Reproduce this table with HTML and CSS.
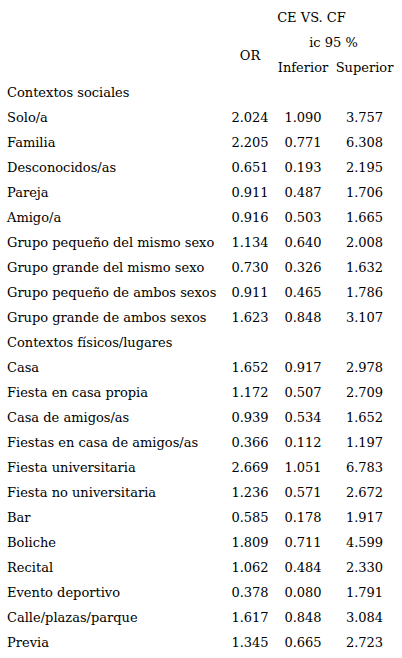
FILE: index.html
```html
<!DOCTYPE html>
<html lang="es">
<head>
<meta charset="utf-8">
<title>CE vs CF</title>
<link rel="stylesheet" href="styles.css">
</head>
<body>
<div class="table">
  <div class="head-title">CE VS. CF</div>
  <div class="head-or">OR</div>
  <div class="head-ic">ic 95 %</div>
  <div class="head-inf">Inferior</div>
  <div class="head-sup">Superior</div>

  <div class="section">Contextos sociales</div>
  <div class="label">Solo/a</div><div class="num">2.024</div><div class="num">1.090</div><div class="num">3.757</div>
  <div class="label">Familia</div><div class="num">2.205</div><div class="num">0.771</div><div class="num">6.308</div>
  <div class="label">Desconocidos/as</div><div class="num">0.651</div><div class="num">0.193</div><div class="num">2.195</div>
  <div class="label">Pareja</div><div class="num">0.911</div><div class="num">0.487</div><div class="num">1.706</div>
  <div class="label">Amigo/a</div><div class="num">0.916</div><div class="num">0.503</div><div class="num">1.665</div>
  <div class="label">Grupo pequeño del mismo sexo</div><div class="num">1.134</div><div class="num">0.640</div><div class="num">2.008</div>
  <div class="label">Grupo grande del mismo sexo</div><div class="num">0.730</div><div class="num">0.326</div><div class="num">1.632</div>
  <div class="label">Grupo pequeño de ambos sexos</div><div class="num">0.911</div><div class="num">0.465</div><div class="num">1.786</div>
  <div class="label">Grupo grande de ambos sexos</div><div class="num">1.623</div><div class="num">0.848</div><div class="num">3.107</div>
  <div class="section">Contextos físicos/lugares</div>
  <div class="label">Casa</div><div class="num">1.652</div><div class="num">0.917</div><div class="num">2.978</div>
  <div class="label">Fiesta en casa propia</div><div class="num">1.172</div><div class="num">0.507</div><div class="num">2.709</div>
  <div class="label">Casa de amigos/as</div><div class="num">0.939</div><div class="num">0.534</div><div class="num">1.652</div>
  <div class="label">Fiestas en casa de amigos/as</div><div class="num">0.366</div><div class="num">0.112</div><div class="num">1.197</div>
  <div class="label">Fiesta universitaria</div><div class="num">2.669</div><div class="num">1.051</div><div class="num">6.783</div>
  <div class="label">Fiesta no universitaria</div><div class="num">1.236</div><div class="num">0.571</div><div class="num">2.672</div>
  <div class="label">Bar</div><div class="num">0.585</div><div class="num">0.178</div><div class="num">1.917</div>
  <div class="label">Boliche</div><div class="num">1.809</div><div class="num">0.711</div><div class="num">4.599</div>
  <div class="label">Recital</div><div class="num">1.062</div><div class="num">0.484</div><div class="num">2.330</div>
  <div class="label">Evento deportivo</div><div class="num">0.378</div><div class="num">0.080</div><div class="num">1.791</div>
  <div class="label">Calle/plazas/parque</div><div class="num">1.617</div><div class="num">0.848</div><div class="num">3.084</div>
  <div class="label">Previa</div><div class="num">1.345</div><div class="num">0.665</div><div class="num">2.723</div>
</div>
</body>
</html>
```
FILE: styles.css
```css
html, body {
  margin: 0;
  padding: 0;
  background: #fff;
}
body {
  font-family: "DejaVu Serif", "Liberation Serif", serif;
  font-size: 13px;
  color: #000;
}
.table {
  display: grid;
  grid-template-columns: 221px 44px 62px 61px;
  grid-auto-rows: 25px;
  padding: 5px 0 0 7px;
  white-space: nowrap;
}
.table > div {
  display: flex;
  align-items: center;
}
.head-title {
  grid-column: 2 / 5;
  grid-row: 1;
  justify-content: center;
}
.head-or {
  grid-column: 2;
  grid-row: 2 / 4;
  justify-content: center;
}
.head-ic {
  grid-column: 3 / 5;
  grid-row: 2;
  justify-content: center;
}
.head-inf {
  grid-column: 3;
  grid-row: 3;
  justify-content: center;
}
.head-sup {
  grid-column: 4;
  grid-row: 3;
  justify-content: center;
}
.section {
  grid-column: 1 / 5;
}
.label {
  grid-column: 1;
}
.num {
  justify-content: center;
}
```
